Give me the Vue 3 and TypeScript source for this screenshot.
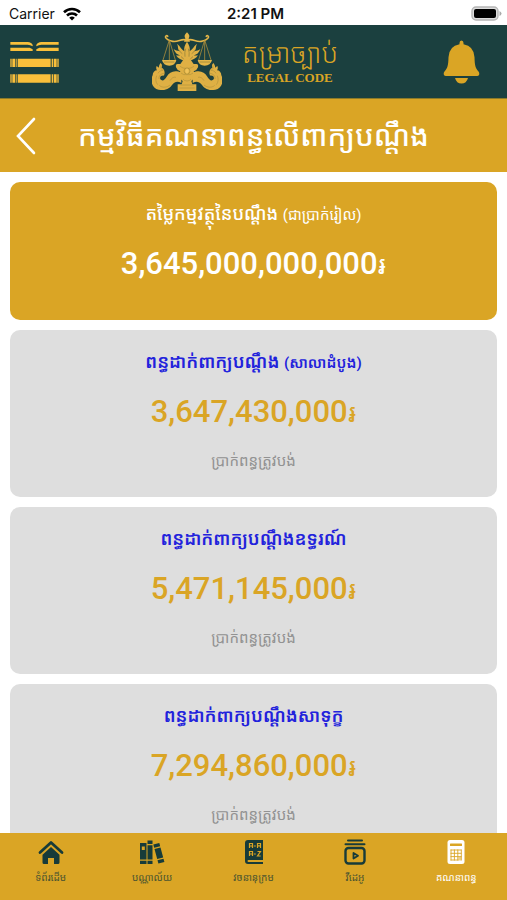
<script setup lang="ts">
interface FeeCard {
  title: string
  note?: string
  amount: string
  caption?: string
  primary?: boolean
}

interface Tab {
  id: string
  label: string
}

const cards: FeeCard[] = [
  { title: 'តម្លៃកម្មវត្ថុនៃបណ្តឹង', note: '(ជាប្រាក់រៀល)', amount: '3,645,000,000,000', primary: true },
  { title: 'ពន្ធដាក់ពាក្យបណ្តឹង', note: '(សាលាដំបូង)', amount: '3,647,430,000', caption: 'ប្រាក់ពន្ធត្រូវបង់' },
  { title: 'ពន្ធដាក់ពាក្យបណ្តឹងឧទ្ធរណ៍', amount: '5,471,145,000', caption: 'ប្រាក់ពន្ធត្រូវបង់' },
  { title: 'ពន្ធដាក់ពាក្យបណ្តឹងសាទុក្ខ', amount: '7,294,860,000', caption: 'ប្រាក់ពន្ធត្រូវបង់' },
]

const tabs: Tab[] = [
  { id: 'home', label: 'ទំព័រដើម' },
  { id: 'library', label: 'បណ្ណាល័យ' },
  { id: 'dictionary', label: 'វចនានុក្រម' },
  { id: 'video', label: 'វីដេអូ' },
  { id: 'calculator', label: 'គណនាពន្ធ' },
]
const activeTab = 'calculator'
</script>

<template>
  <div class="screen">
    <div class="status">
      <div class="carrier">
        <span>Carrier</span>
        <svg width="18" height="14" viewBox="0 0 18 14" aria-hidden="true">
          <g fill="none" stroke="#000" stroke-width="2.6">
            <path d="M1 5.2a11.6 11.6 0 0 1 16 0" />
            <path d="M4 8.5a7.2 7.2 0 0 1 10 0" />
          </g>
          <path d="M9 13.6 6.2 10.8a4 4 0 0 1 5.6 0z" />
        </svg>
      </div>
      <span class="time">2:21 PM</span>
      <svg class="battery" width="31" height="15" viewBox="0 0 31 15" aria-hidden="true">
        <rect x="1" y="1" width="26" height="13" rx="4" fill="#ddd" stroke="#b5b5b5" stroke-width="1.4" />
        <rect x="3" y="3" width="22" height="9" rx="2" />
        <path d="M28.500 5v5q2-1 2-2.500t-2-2.500" fill="#aaa" />
      </svg>
    </div>

    <header class="header">
      <button class="icon-button" type="button" aria-label="Menu">
        <svg width="49" height="42" viewBox="0 0 147 126" aria-hidden="true">
          <g fill="#f9bf3b">
            <path d="M1 3h52q12 1 15 9v4q-7-5-15-5H1zM146 3H94q-12 1-15 9v4q7-5 15-5h52zM1 20h58l9 5v5H1zM146 20H88l-9 5v5h67z" />
            <path d="M1 53h4v25H1zM7 53h9v25H7zM23 53h99v25H23zM125 53h4v25h-4zM131 53h9v25h-9zM142 53h4v25h-4z" />
            <path d="M1 100h4v25H1zM7 100h9v25H7zM23 100h99v25H23zM125 100h4v25h-4zM131 100h9v25h-9zM142 100h4v25h-4z" />
            <path d="M18 53h2v25h-2zM18 100h2v25h-2z" />
          </g>
        </svg>
      </button>
      <div class="brand">
        <svg width="70" height="60" viewBox="18 18 210 180" aria-hidden="true">
          <defs>
            <g id="emblem-half">
              <path d="M123 43c15-8 27 7 43 3 10-2 18-6 21-11 2-5-3-8-6-4" fill="none" stroke="#e4b648" stroke-width="5" stroke-linecap="round" />
              <path d="M176 42 158 102M176 42l19 60M176 42v60" fill="none" stroke="#c89e3c" stroke-width="2" />
              <path d="M155 102h43q-4 17-22 17t-21-17z" fill="#e4b648" />
              <path d="M161 108h31" stroke="#8d7b35" stroke-width="2" />
              <path d="M123 47c6 10 10 17 8 28 9-4 10-12 22-22-5 11-1 15-8 23 8-3 12-2 18-7-5 12-10 17-20 19 6 1 9 1 13 0-6 9-13 13-21 15l10 14h-22z" fill="#dfb044" />
              <path d="M123 114h28q7 0 5 10-3 9-13 12l5 12q-4 12-12 17l3 10h12v20h-28z" fill="#dfb044" />
              <path d="M140 140c20-10 36-2 43 11 7 12 14 16 20 9 3-8-3-12-11-11-4-12-1-20 7-24-2-6-1-10 3-14 4 5 6 9 5 14l7-5c2 5 2 9-1 13 7 0 13 6 13 15 8 17 2 39-18 43-22 5-34-5-42-16-6-8-15-10-26-4z" fill="#dfb044" />
              <path d="M194 133c8 0 13 3 16 9M190 142c12 0 18 8 17 17M174 177c8 7 23 10 32 1M156 154c8-2 13 2 18 10M214 149c4 10 3 20-3 27M201 118q3 10-5 15M144 121q-8 7-21 6M141 141q-7 7-18 5M135 159q-4 6-12 6M123 177h20M123 186h23" fill="none" stroke="#a88c38" stroke-width="1.600" />
              <path d="M133 100q4-7 8-8M137 83q7-4 10-11M129 92q2-13-2-24" fill="none" stroke="#8a7a3a" stroke-width="2" />
            </g>
          </defs>
          <use href="#emblem-half" />
          <use href="#emblem-half" transform="matrix(-1 0 0 1 246 0)" />
          <path d="M123 19c8 7 9 13 5 18l4 10h-18l4-10c-4-5-3-11 5-18z" fill="#e4b648" />
          <circle cx="123" cy="135" r="9" fill="none" stroke="#a88c38" stroke-width="2" />
          <path d="m123 126 6 9-6 9-6-9z" fill="#f0c35a" />
        </svg>
        <div class="brand-text">
          <span class="brand-khmer">តម្រាច្បាប់</span>
          <span class="brand-latin">LEGAL CODE</span>
        </div>
      </div>
      <button class="icon-button" type="button" aria-label="Notifications">
        <svg width="37" height="44" viewBox="0 0 37 44" aria-hidden="true">
          <path fill="#daa525" d="M16.500 3q0-2.500 2-2.500t2 2.500v1.200q10.500 1.800 11 13c.2 8.300 1 10.800 4 14.300q1 1.300.8 2.800-.2 1.700-2 1.700H2.700q-1.800 0-2-1.700-.2-1.500.8-2.800c3-3.500 3.800-6 4-14.300q.5-11.200 11-13zM12 38h13q-1.500 5.500-6.500 5.500T12 38z" />
        </svg>
      </button>
    </header>

    <div class="title-bar">
      <button class="icon-button back" type="button" aria-label="Back">
        <svg width="20" height="38" viewBox="0 0 20 38" aria-hidden="true">
          <path d="M18 2 2 19l16 17" fill="none" stroke="#fff" stroke-width="2.600" stroke-linecap="round" />
        </svg>
      </button>
      <h1>កម្មវិធីគណនាពន្ធលើពាក្យបណ្តឹង</h1>
    </div>

    <main class="content">
      <section v-for="card in cards" :key="card.title" class="card" :class="{ primary: card.primary }">
        <h2>{{ card.title }} <small v-if="card.note">{{ card.note }}</small></h2>
        <p class="amount">{{ card.amount }}<span class="riel">៛</span></p>
        <p v-if="card.caption" class="caption">{{ card.caption }}</p>
      </section>
    </main>

    <nav class="tabs">
      <a v-for="tab in tabs" :key="tab.id" href="#" class="tab" :class="{ active: tab.id === activeTab }">
        <svg width="26" height="26" viewBox="0 0 26 26" aria-hidden="true">
          <template v-if="tab.id === 'home'">
            <path d="m2 13.500 11-10 11 10" fill="none" stroke="currentColor" stroke-width="2.800" stroke-linecap="round" stroke-linejoin="round" />
            <path d="m13 8 8.500 7.700v7.800q0 1.500-1.500 1.500h-4v-6h-6v6H6q-1.500 0-1.500-1.500v-7.800z" fill="currentColor" />
          </template>
          <template v-else-if="tab.id === 'library'">
            <path d="M1 4h6.500v16.500H1zM1 21.800h6.500V25H1zM8.500 1.500h5V5h-5zM8.500 6.200h5v14.300h-5zM8.500 21.800h5V25h-5z" fill="currentColor" />
            <path d="m14.300 5.500 6-1.500.9 3.300-6 1.500zM15.500 10l6-1.500 2.700 10-6 1.600zM18.500 21.300l6-1.600.9 3.300-6 1.600z" fill="currentColor" />
            <path d="M2.800 7.500h3v3.500h-3z" fill="#daa525" />
          </template>
          <template v-else-if="tab.id === 'dictionary'">
            <path d="M7 1h15v20H7.500q-1 0-1 1t1 1H22v2H7q-3 0-3-3V4q0-3 3-3z" fill="currentColor" />
            <g fill="none" stroke="#daa525" stroke-width="1.200">
              <path d="M8.500 9V4.500h3V9M8.500 7h3M12.800 7h2M16.500 9V4.500h3V9M16.500 6.800h3M8.500 17v-4.500h3V17M8.500 15h3M12.800 15h2M16.500 12.500h3L16.500 17h3.200" />
            </g>
          </template>
          <template v-else-if="tab.id === 'video'">
            <path d="M6 1.500h14M3.500 5.300h19" stroke="currentColor" stroke-width="2" stroke-linecap="round" />
            <rect x="3.500" y="9" width="19" height="15.500" rx="3" fill="none" stroke="currentColor" stroke-width="2.400" />
            <path d="m11.500 14 4.500 2.800-4.500 2.800z" fill="none" stroke="currentColor" stroke-width="1.800" stroke-linejoin="round" />
          </template>
          <template v-else>
            <rect x="4.500" y="1" width="17" height="24" rx="2.500" fill="currentColor" />
            <rect x="7" y="4.500" width="12" height="2.500" rx=".5" fill="#daa525" />
            <path d="M7.500 11h11M7.500 14.300h11M7.500 17.600h11M7.500 21h8M8 10.500v11M11.400 10.500v11M14.800 10.500v11M18.300 10.500v11" fill="none" stroke="#daa525" stroke-width=".9" />
            <path d="M15.300 18h2.800v3.500h-2.800z" fill="#daa525" opacity=".5" />
          </template>
        </svg>
        <span class="tab-label">{{ tab.label }}</span>
      </a>
    </nav>
  </div>
</template>

<style>
body {
  margin: 0;
  background: #fff;
}
</style>

<style scoped>
.screen {
  display: flex;
  flex-direction: column;
  height: 100vh;
  overflow: hidden;
  font-family: Roboto, "Noto Sans Khmer", "Khmer OS Battambang", "Khmer OS", "Noto Sans", sans-serif;
}

.status {
  display: grid;
  grid-template-columns: 1fr auto 1fr;
  align-items: center;
  flex: none;
  height: 25px;
  padding: 2px 5px 0 9px;
  box-sizing: border-box;
  font: 14px/22px Inter, sans-serif;
  color: #111;
}

.carrier {
  display: flex;
  align-items: center;
  gap: 8px;
}

.time {
  font-size: 15px;
  font-weight: 600;
}

.battery {
  justify-self: end;
}

.header {
  display: flex;
  align-items: center;
  justify-content: space-between;
  flex: none;
  height: 74px;
  padding: 0 27px 0 10px;
  box-sizing: border-box;
  border-bottom: 1px solid #8d7b28;
  background: #1b403f;
}

.icon-button {
  display: flex;
  padding: 0;
  border: 0;
  background: none;
}

.brand {
  display: flex;
  align-items: center;
  gap: 20px;
  margin-right: 12px;
}

.brand-text {
  display: flex;
  flex-direction: column;
  align-items: center;
  color: #daa525;
}

.brand-khmer {
  font-size: 27px;
  font-weight: 300;
  line-height: 32px;
}

.brand-latin {
  font: bold 13px/16px "Liberation Serif", serif;
}

.title-bar {
  display: grid;
  grid-template-columns: 60px 1fr 60px;
  align-items: center;
  flex: none;
  height: 73px;
  background: #daa525;
}

.back {
  padding-left: 16px;
}

h1 {
  margin: 0;
  font-size: 29px;
  font-weight: 500;
  line-height: 40px;
  text-align: center;
  white-space: nowrap;
  color: #fff;
}

.content {
  display: flex;
  flex-direction: column;
  flex: 1;
  gap: 10px;
  min-height: 0;
  padding: 10px 10px 0;
  overflow-y: auto;
  scrollbar-width: none;
}

.card {
  flex: none;
  padding: 15px 0 20px;
  border-radius: 10px;
  background: #dedede;
  text-align: center;
}

.card.primary {
  padding-bottom: 34px;
  background: #daa525;
}

h2 {
  margin: 0;
  font-size: 18px;
  font-weight: 600;
  line-height: 34px;
  color: #2222dc;
}

h2 small {
  font-size: 15px;
  line-height: 1;
}

.amount {
  margin: 11px 0 0;
  font-size: 31px;
  font-weight: 500;
  line-height: 44px;
  color: #daa525;
}

.riel {
  font-size: 26px;
  font-weight: 400;
  line-height: 1;
}

.caption {
  margin: 11px 0 0;
  font-size: 15px;
  line-height: 32px;
  color: #929292;
}

.primary h2,
.primary .amount {
  color: #fff;
}

.primary h2 {
  font-weight: 500;
}

.primary small {
  font-weight: 400;
}

.tabs {
  display: flex;
  flex: none;
  height: 67px;
  background: #daa525;
}

.tab {
  display: flex;
  flex: 1;
  flex-direction: column;
  align-items: center;
  gap: 4px;
  padding-top: 6px;
  font-size: 10px;
  line-height: 18px;
  text-decoration: none;
  color: #173b39;
}

.tab-label {
  color: #4a5430;
}

.tab.active,
.active .tab-label {
  color: #fff;
}
</style>
